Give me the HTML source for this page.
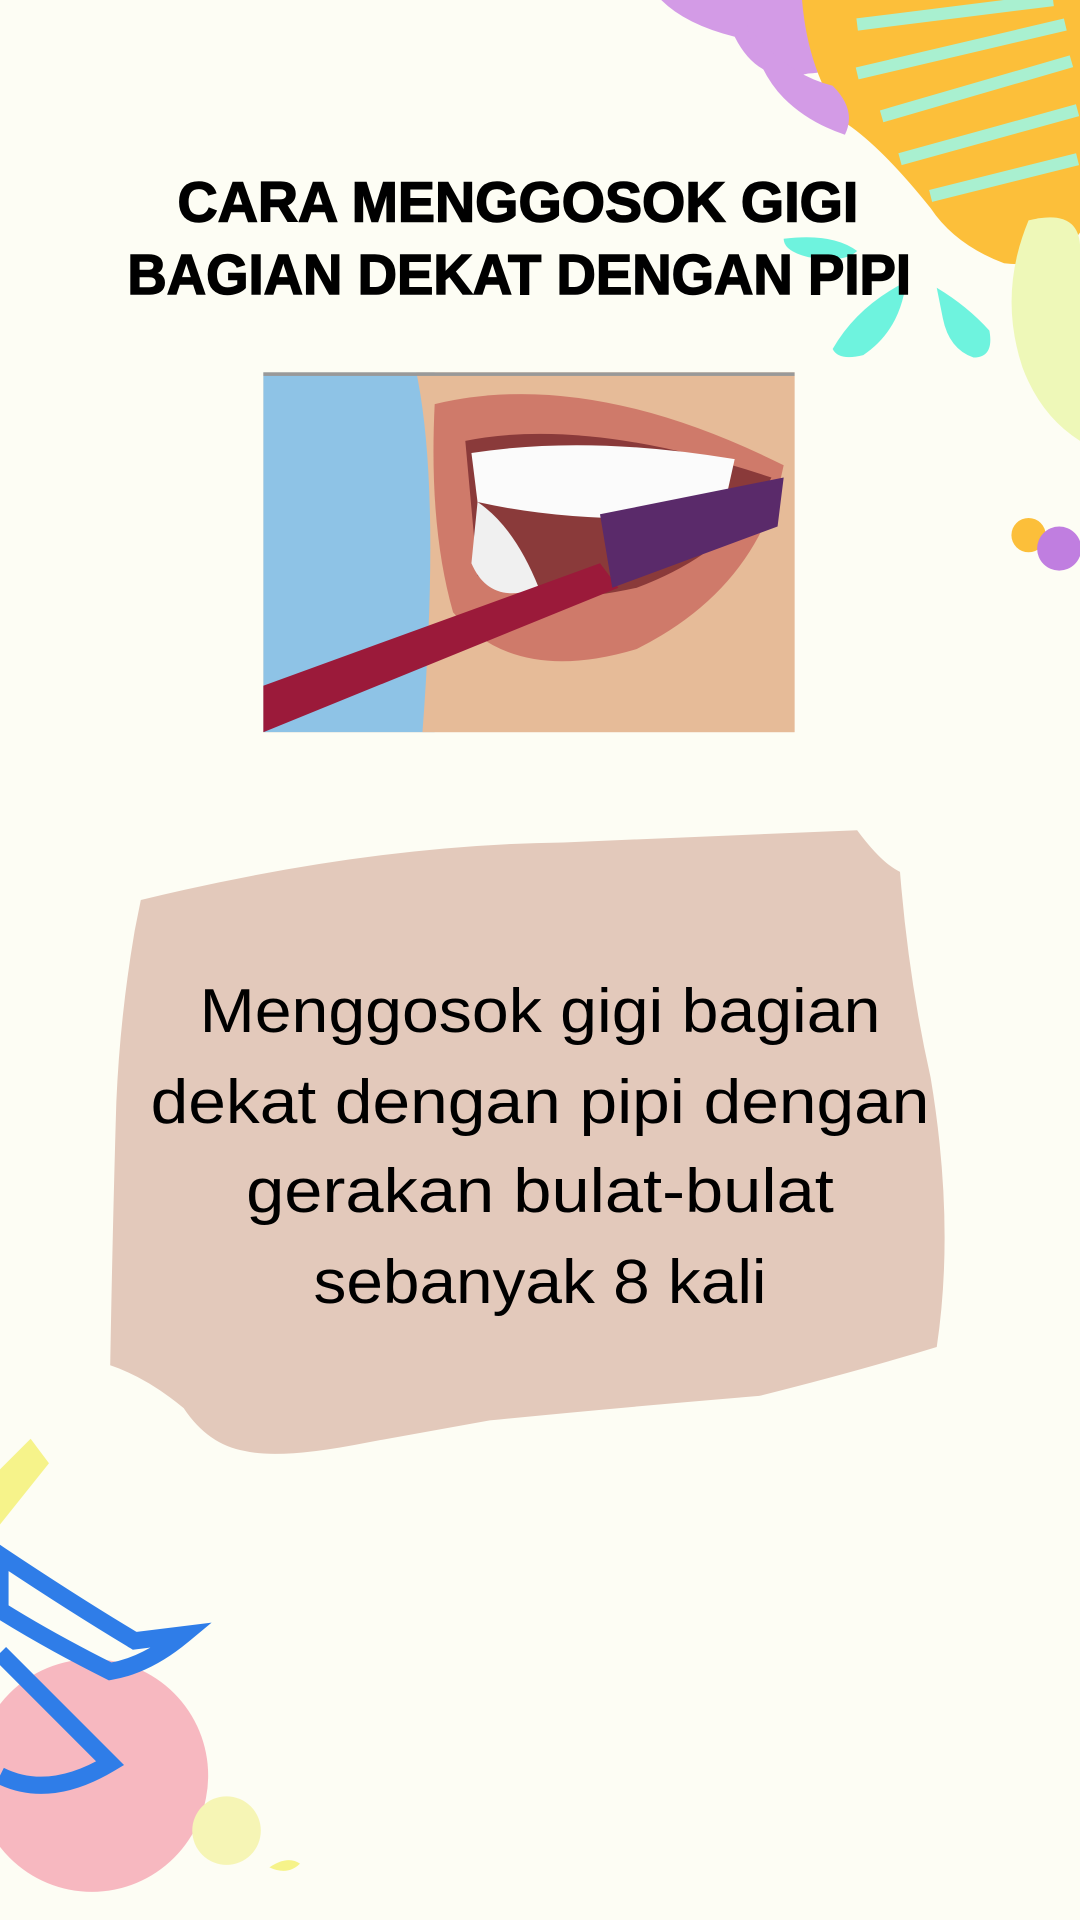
<!DOCTYPE html>
<html><head><meta charset="utf-8"><style>
html,body{margin:0;padding:0;background:#fdfdf4;}
svg{display:block}
</style></head><body>
<svg width="1080" height="1920" viewBox="0 0 882 1568" xmlns="http://www.w3.org/2000/svg">
<rect width="882" height="1568" fill="#fdfdf4"/>
<path d="M540 0 L700 0 L700 20 Q690 60 660 60 Q620 70 600 30 Q560 20 540 0Z" fill="#d39be6"/>
<path d="M655 0 L882 0 L882 190 Q860 220 820 215 Q780 200 760 170 Q720 120 690 100 Q660 60 655 0Z" fill="#fcbf3a"/>
<path d="M700 20 L860 0 M700 60 L870 20 M720 95 L875 50 M735 130 L880 90 M760 160 L880 130" stroke="#a9f0d0" stroke-width="10" fill="none"/>
<path d="M610 20 Q640 60 680 70 Q700 90 690 110 Q660 100 640 80 Q620 60 610 20Z" fill="#d39be6"/>
<path d="M840 180 Q880 170 882 200 L882 360 Q850 340 835 300 Q815 240 840 180Z" fill="#eef8b8"/>
<path d="M640 195 Q680 190 700 205 Q690 215 660 210 Q640 205 640 195Z" fill="#6ef3de"/>
<path d="M680 285 Q700 250 740 230 Q735 270 705 290 Q685 295 680 285Z" fill="#6ef3de"/>
<path d="M765 235 Q790 250 808 270 Q812 292 795 292 Q775 285 770 260Z" fill="#6ef3de"/>
<circle cx="840" cy="437" r="14" fill="#fcbf3a"/>
<circle cx="865" cy="448" r="18" fill="#c07ee0"/>
<g font-family="Liberation Sans, sans-serif" font-weight="bold" fill="#000" stroke="#000" stroke-width="1.2" text-anchor="middle">
<text x="423" y="181" font-size="46" textLength="556" lengthAdjust="spacingAndGlyphs">CARA MENGGOSOK GIGI</text>
<text x="424" y="240" font-size="46" textLength="640" lengthAdjust="spacingAndGlyphs">BAGIAN DEKAT DENGAN PIPI</text>
</g>
<defs><clipPath id="c"><rect x="215" y="304" width="434" height="294"/></clipPath></defs>
<g clip-path="url(#c)">
<rect x="215" y="304" width="434" height="294" fill="#e3b894"/>
<rect x="215" y="304" width="140" height="294" fill="#8ec3e6"/>
<path d="M340 304 Q360 400 345 598 L649 598 L649 304Z" fill="#e6bb98"/>
<path d="M355 330 Q480 300 640 380 Q620 480 520 530 Q420 560 370 500 Q350 430 355 330Z" fill="#cf7a6a"/>
<path d="M380 360 Q480 340 630 390 Q600 450 520 480 Q430 500 390 470 Z" fill="#8a3a3a"/>
<path d="M385 370 Q480 355 600 375 L590 420 Q480 430 390 410Z" fill="#fbfbfb"/>
<path d="M390 410 Q420 430 440 480 Q400 495 385 460Z" fill="#f0f0f0"/>
<path d="M215 560 L490 460 L505 480 L215 598Z" fill="#9b1a3a"/>
<path d="M490 420 L640 390 L635 430 L500 480Z" fill="#5a2a6a"/>
<rect x="215" y="304" width="434" height="3" fill="#999"/>
</g>
<path d="M115 735 Q300 690 460 688 L700 678 Q720 705 735 712 Q742 800 760 880 Q780 1000 765 1100 Q700 1120 620 1140 Q500 1150 400 1160 L300 1178 Q230 1192 200 1185 Q170 1180 150 1150 Q120 1125 90 1115 Q92 1000 95 900 Q98 830 110 760Z" fill="#e3c9bb"/>
<g font-family="Liberation Sans, sans-serif" font-size="51" fill="#000" text-anchor="middle">
<text x="441" y="843" textLength="556" lengthAdjust="spacingAndGlyphs">Menggosok gigi bagian</text>
<text x="441" y="917" textLength="636" lengthAdjust="spacingAndGlyphs">dekat dengan pipi dengan</text>
<text x="441" y="990" textLength="480" lengthAdjust="spacingAndGlyphs">gerakan bulat-bulat</text>
<text x="441" y="1064" textLength="370" lengthAdjust="spacingAndGlyphs">sebanyak 8 kali</text>
</g>
<path d="M0 1200 L25 1175 L40 1195 L0 1245Z" fill="#f6f38a"/>
<circle cx="75" cy="1450" r="95" fill="#f7b8c0"/>
<path d="M0 1270 Q60 1310 110 1340 L150 1335 Q120 1360 90 1365 Q40 1340 0 1315Z M0 1350 Q50 1400 90 1440 Q40 1470 0 1450" fill="none" stroke="#2f7de8" stroke-width="14"/>
<circle cx="185" cy="1495" r="28" fill="#f6f5b5"/>
<path d="M220 1525 Q235 1515 245 1522 Q235 1532 220 1525Z" fill="#f6f38a"/>
</svg>
</body></html>
